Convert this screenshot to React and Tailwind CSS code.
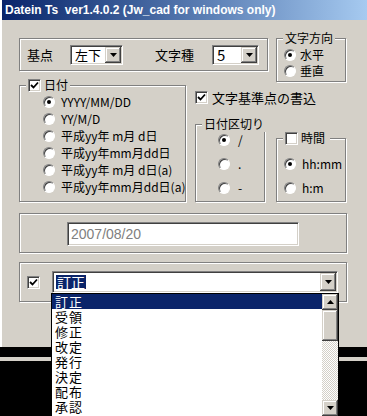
import React from "react";

const jp = { fontFamily: "'Noto Sans CJK JP', sans-serif" };

function Check({ checked }) {
  return (
    <span className="flex h-[13px] w-[13px] shrink-0 items-center justify-center border border-[#808080] border-r-white border-b-white bg-white shadow-[inset_1px_1px_0_#404040,inset_-1px_-1px_0_#d4d0c8]">
      {checked && (
        <svg width="9" height="9" viewBox="0 0 9 9">
          <path d="M1 4 L3.5 6.5 L8 1.5" stroke="#000" strokeWidth="1.8" fill="none" />
        </svg>
      )}
    </span>
  );
}

function Radio({ on }) {
  return (
    <span className="flex h-[12px] w-[12px] shrink-0 items-center justify-center rounded-full border border-[#808080] border-r-white border-b-white bg-white shadow-[inset_1px_1px_0_#404040]">
      {on && <span className="h-[4px] w-[4px] rounded-full bg-black" />}
    </span>
  );
}

function Arrow({ up }) {
  return (
    <svg width="7" height="4" viewBox="0 0 7 4">
      <path d={up ? "M3.5 0 L7 4 L0 4 Z" : "M0 0 L7 0 L3.5 4 Z"} fill="#000" />
    </svg>
  );
}

function Btn({ up, className = "" }) {
  return (
    <span
      className={`flex w-[16px] shrink-0 items-center justify-center bg-[#d4d0c8] shadow-[inset_-1px_-1px_0_#404040,inset_1px_1px_0_#d4d0c8,inset_-2px_-2px_0_#808080,inset_2px_2px_0_#fff] ${className}`}
    >
      <Arrow up={up} />
    </span>
  );
}

function Combo({ value, w, h = "h-[20px]", size = "text-[13px]", sel }) {
  return (
    <div
      className={`flex ${h} ${w} border border-[#808080] border-r-white border-b-white bg-white p-[1px] shadow-[inset_1px_1px_0_#404040,inset_-1px_-1px_0_#d4d0c8]`}
    >
      <div className={`flex flex-1 items-center whitespace-nowrap pl-[2px] ${size} leading-none`} style={jp}>
        <span className={sel ? "bg-[#0a246a] px-[1px] text-white" : "px-[1px]"}>{value}</span>
      </div>
      <Btn />
    </div>
  );
}

function Group({ title, className = "", children }) {
  return (
    <div
      className={`relative border border-[#808080] shadow-[1px_1px_0_#fff,inset_1px_1px_0_#fff] ${className}`}
    >
      {title && (
        <div
          className="absolute left-[6px] -top-[9px] flex items-center gap-[3px] whitespace-nowrap bg-[#d4d0c8] px-[2px] text-[12px] leading-[16px]"
          style={jp}
        >
          {title}
        </div>
      )}
      {children}
    </div>
  );
}

function RadioRow({ on, label, className = "" }) {
  return (
    <div className={`flex items-center whitespace-nowrap ${className}`}>
      <Radio on={on} />
      <span className="text-[12px] leading-none" style={jp}>
        {label}
      </span>
    </div>
  );
}

export default function App() {
  const dateFormats = [
    "YYYY/MM/DD",
    "YY/M/D",
    "平成yy年 m月 d日",
    "平成yy年mm月dd日",
    "平成yy年 m月 d日(a)",
    "平成yy年mm月dd日(a)",
  ];
  const items = ["訂正", "受領", "修正", "改定", "発行", "決定", "配布", "承認"];

  return (
    <div className="relative h-[416px] w-[367px] overflow-hidden bg-black text-black">
      {/* ===== Window ===== */}
      <div className="h-[347px] border-l-2 border-l-white bg-[#d4d0c8]">
        <div className="flex h-[20px] items-center bg-gradient-to-r from-[#0a246a] to-[#a6caf0] pl-[3px]">
          <span
            className="whitespace-pre text-[12px] font-bold text-white"
            style={{ fontFamily: "'Liberation Sans', Arial, sans-serif" }}
          >
            Datein Ts  ver1.4.0.2 (Jw_cad for windows only)
          </span>
        </div>

        <div className="pl-[17px]">
          {/* ===== Row 1 ===== */}
          <div className="mt-[18px] flex items-start">
            <Group className="flex h-[33px] w-[249px] items-center whitespace-nowrap pl-[7px]">
              <span className="text-[13px] leading-none" style={jp}>
                基点
              </span>
              <div className="ml-[17px]">
                <Combo value="左下" w="w-[53px]" />
              </div>
              <span className="ml-[32px] text-[13px] leading-none" style={jp}>
                文字種
              </span>
              <div className="ml-[18px]">
                <Combo value="5" w="w-[47px]" size="text-[15px]" />
              </div>
            </Group>
            <Group title="文字方向" className="ml-[8px] h-[44px] w-[70px] pl-[7px] pt-[8px]">
              <RadioRow on label="水平" className="h-[16px] gap-[4px]" />
              <RadioRow label="垂直" className="h-[16px] gap-[4px]" />
            </Group>
          </div>

          {/* ===== Row 2 ===== */}
          <div className="mt-[3px] flex items-start">
            <Group
              title={
                <>
                  <Check checked />
                  <span>日付</span>
                </>
              }
              className="h-[117px] w-[167px] pl-[23px] pt-[7px]"
            >
              {dateFormats.map((f, i) => (
                <RadioRow key={f} on={i === 0} label={f} className="h-[17px] gap-[6px]" />
              ))}
            </Group>

            <div className="ml-[9px] flex flex-col">
              <div className="mt-[6px] flex items-center gap-[4px] whitespace-nowrap">
                <Check checked />
                <span className="text-[13px] leading-none" style={jp}>
                  文字基準点の書込
                </span>
              </div>
              <div className="mt-[20px] flex items-end">
                <Group title="日付区切り" className="h-[78px] w-[70px] pl-[22px] pt-[3px]">
                  <RadioRow on label="/" className="h-[24px] gap-[8px]" />
                  <RadioRow label="." className="h-[24px] gap-[8px]" />
                  <RadioRow label="-" className="h-[24px] gap-[8px]" />
                </Group>
                <Group
                  title={
                    <>
                      <Check />
                      <span className="pr-[3px]">時間</span>
                    </>
                  }
                  className="ml-[11px] h-[64px] w-[70px] pl-[7px] pt-[13px]"
                >
                  <RadioRow on label="hh:mm" className="h-[24px] gap-[6px]" />
                  <RadioRow label="h:m" className="h-[24px] gap-[6px]" />
                </Group>
              </div>
            </div>
          </div>

          {/* ===== Row 3 ===== */}
          <Group className="mt-[11px] h-[40px] w-[328px] pl-[47px] pt-[8px]">
            <div className="flex h-[24px] w-[232px] items-center border border-[#808080] border-r-white border-b-white bg-white pl-[3px] shadow-[inset_1px_1px_0_#404040,inset_-1px_-1px_0_#d4d0c8]">
              <span
                className="text-[14px] leading-none text-[#808080]"
                style={{ fontFamily: "'Liberation Sans', Arial, sans-serif" }}
              >
                2007/08/20
              </span>
            </div>
          </Group>

          {/* ===== Row 4 ===== */}
          <Group className="mt-[9px] flex h-[40px] w-[328px] items-center pl-[7px]">
            <Check checked />
            <div className="ml-[12px]">
              <Combo value="訂正" w="w-[286px]" h="h-[22px]" size="text-[14px]" sel />
            </div>
          </Group>
        </div>
      </div>

      <div className="mt-[10px] h-[4px] bg-[#d4d0c8]" />

      {/* ===== Dropdown list ===== */}
      <div className="absolute left-[51px] top-[293px] flex h-[124px] w-[288px] border border-black bg-white">
        <div className="flex-1">
          {items.map((it, i) => (
            <div
              key={it}
              className={`h-[15px] pl-[3px] text-[13px] leading-[15px] tracking-[1px] ${
                i === 0 ? "bg-[#0a246a] text-white" : ""
              }`}
              style={jp}
            >
              {it}
            </div>
          ))}
        </div>
        <div className="flex w-[16px] flex-col">
          <Btn up className="h-[16px]" />
          <span className="h-[31px] bg-[#d4d0c8] shadow-[inset_-1px_-1px_0_#404040,inset_1px_1px_0_#d4d0c8,inset_-2px_-2px_0_#808080,inset_2px_2px_0_#fff]" />
          <span className="flex-1 bg-[repeating-conic-gradient(#d4d0c8_0%_25%,#ffffff_0%_50%)] bg-[length:2px_2px]" />
          <Btn className="h-[16px]" />
        </div>
      </div>
    </div>
  );
}
